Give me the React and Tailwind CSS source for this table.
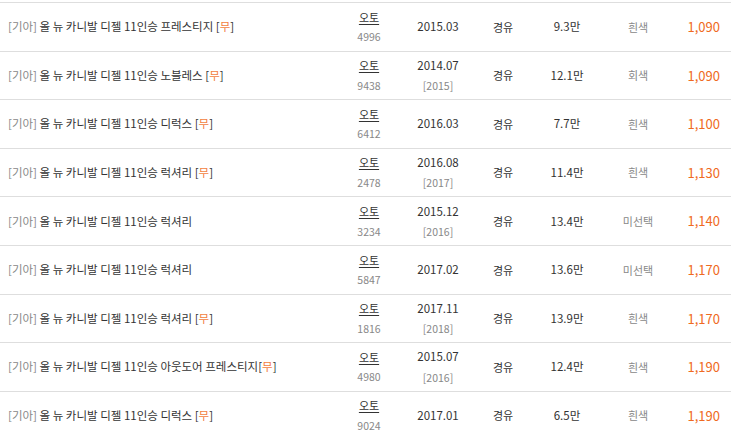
const rows = [
  { name: '올 뉴 카니발 디젤 11인승 프레스티지', mu: true, gear: '오토', no: '4996', date: '2015.03', year: '', fuel: '경유', km: '9.3만', color: '흰색', price: '1,090' },
  { name: '올 뉴 카니발 디젤 11인승 노블레스', mu: true, gear: '오토', no: '9438', date: '2014.07', year: '[2015]', fuel: '경유', km: '12.1만', color: '회색', price: '1,090' },
  { name: '올 뉴 카니발 디젤 11인승 디럭스', mu: true, gear: '오토', no: '6412', date: '2016.03', year: '', fuel: '경유', km: '7.7만', color: '흰색', price: '1,100' },
  { name: '올 뉴 카니발 디젤 11인승 럭셔리', mu: true, gear: '오토', no: '2478', date: '2016.08', year: '[2017]', fuel: '경유', km: '11.4만', color: '흰색', price: '1,130' },
  { name: '올 뉴 카니발 디젤 11인승 럭셔리', mu: false, gear: '오토', no: '3234', date: '2015.12', year: '[2016]', fuel: '경유', km: '13.4만', color: '미선택', price: '1,140' },
  { name: '올 뉴 카니발 디젤 11인승 럭셔리', mu: false, gear: '오토', no: '5847', date: '2017.02', year: '', fuel: '경유', km: '13.6만', color: '미선택', price: '1,170' },
  { name: '올 뉴 카니발 디젤 11인승 럭셔리', mu: true, gear: '오토', no: '1816', date: '2017.11', year: '[2018]', fuel: '경유', km: '13.9만', color: '흰색', price: '1,170' },
  { name: '올 뉴 카니발 디젤 11인승 아웃도어 프레스티지', mu: true, gear: '오토', no: '4980', date: '2015.07', year: '[2016]', fuel: '경유', km: '12.4만', color: '흰색', price: '1,190', tight: true },
  { name: '올 뉴 카니발 디젤 11인승 디럭스', mu: true, gear: '오토', no: '9024', date: '2017.01', year: '', fuel: '경유', km: '6.5만', color: '흰색', price: '1,190' },
];

export default function App() {
  return (
    <div className="w-[731px] h-[434px] overflow-hidden bg-white pt-[2px] text-[11px] text-[#333] font-['Noto_Sans_CJK_KR','Noto_Sans',sans-serif]">
      {rows.map((r, i) => (
        <div key={i} className="flex items-center h-[48.6px] border-t border-[#dedede]">
          <div className="w-[334px] pl-2 whitespace-nowrap text-[11.5px]">
            <span className="text-[#888]">[기아]</span> {r.name}
            {r.mu && (
              <>
                {r.tight ? '' : ' '}[<span className="text-[#f27e3f]">무</span>]
              </>
            )}
          </div>
          <div className="w-[70px] flex flex-col items-center gap-[4px]">
            <span className="underline underline-offset-2">{r.gear}</span>
            <span className="text-[10.5px] text-[#888]">{r.no}</span>
          </div>
          <div className="w-[68px] flex flex-col items-center gap-[4px]">
            <span className="text-[11.5px]">{r.date}</span>
            {r.year && <span className="text-[10.5px] text-[#888]">{r.year}</span>}
          </div>
          <div className="w-[62px] text-center">{r.fuel}</div>
          <div className="w-[66px] text-center text-[11.5px]">{r.km}</div>
          <div className="w-[76px] text-center text-[#888]">{r.color}</div>
          <div className="flex-1 text-right pr-[11px] text-[13px] text-[#ef6a22]">{r.price}</div>
        </div>
      ))}
    </div>
  );
}
